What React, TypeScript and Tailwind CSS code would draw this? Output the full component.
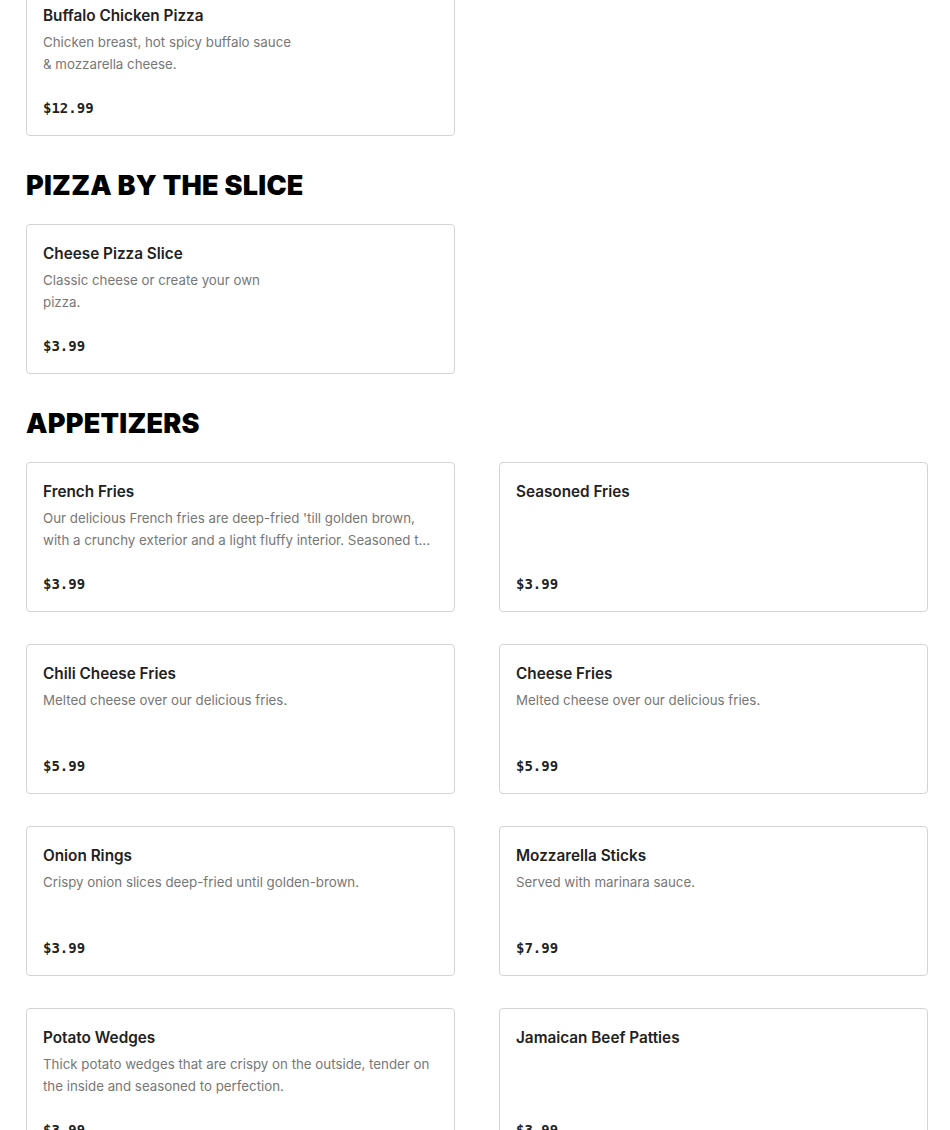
import React from 'react';

type Item = { name: string; desc?: React.ReactNode; price: string };

const sections: { title?: string; cols: 1 | 2; items: Item[] }[] = [
  {
    cols: 1,
    items: [
      {
        name: 'Buffalo Chicken Pizza',
        desc: (
          <>
            Chicken breast, hot spicy buffalo sauce
            <br />& mozzarella cheese.
          </>
        ),
        price: '$12.99',
      },
    ],
  },
  {
    title: 'PIZZA BY THE SLICE',
    cols: 1,
    items: [
      {
        name: 'Cheese Pizza Slice',
        desc: (
          <>
            Classic cheese or create your own
            <br />
            pizza.
          </>
        ),
        price: '$3.99',
      },
    ],
  },
  {
    title: 'APPETIZERS',
    cols: 2,
    items: [
      {
        name: 'French Fries',
        desc: "Our delicious French fries are deep-fried 'till golden brown, with a crunchy exterior and a light fluffy interior. Seasoned to perfection with our signature blend.",
        price: '$3.99',
      },
      { name: 'Seasoned Fries', price: '$3.99' },
      { name: 'Chili Cheese Fries', desc: 'Melted cheese over our delicious fries.', price: '$5.99' },
      { name: 'Cheese Fries', desc: 'Melted cheese over our delicious fries.', price: '$5.99' },
      { name: 'Onion Rings', desc: 'Crispy onion slices deep-fried until golden-brown.', price: '$3.99' },
      { name: 'Mozzarella Sticks', desc: 'Served with marinara sauce.', price: '$7.99' },
      {
        name: 'Potato Wedges',
        desc: 'Thick potato wedges that are crispy on the outside, tender on the inside and seasoned to perfection.',
        price: '$3.99',
      },
      { name: 'Jamaican Beef Patties', price: '$3.99' },
    ],
  },
];

function MenuCard({ item }: { item: Item }) {
  return (
    <div className="h-[150px] rounded-[4px] border border-[#d4d4d4] bg-white px-4 pt-[18px]">
      <h3 className="text-[15.3px] leading-[22px] font-semibold text-[#222]">{item.name}</h3>
      <p className="mt-[4px] h-[44px] overflow-hidden pr-[4px] text-[13.3px] leading-[22px] text-[#777] line-clamp-2">
        {item.desc}
      </p>
      <div className="mt-[23px] text-[14px] leading-[20px] font-bold text-[#222] [font-family:'DejaVu_Sans_Mono',monospace]">
        {item.price}
      </div>
    </div>
  );
}

export default function App() {
  return (
    <div className="min-h-screen overflow-hidden bg-white [font-family:Inter,'Noto_Sans',sans-serif]">
      <div className="ml-[26px] mt-[-14px] w-[902px]">
        {sections.map((s, i) => (
          <section key={i}>
            {s.title && (
              <h2 className="mt-[32px] mb-[20px] h-[36px] text-[27px] leading-[36px] font-black tracking-[0.01em] text-black">
                {s.title}
              </h2>
            )}
            <div className={s.cols === 2 ? 'grid grid-cols-2 gap-x-[44px] gap-y-[32px]' : 'w-[429px]'}>
              {s.items.map((it) => (
                <MenuCard key={it.name} item={it} />
              ))}
            </div>
          </section>
        ))}
      </div>
    </div>
  );
}
